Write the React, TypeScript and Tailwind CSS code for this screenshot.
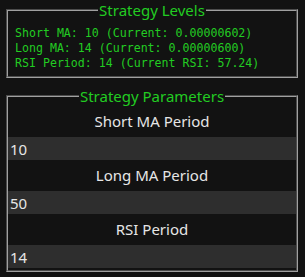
const levels = [
  "Short MA: 10 (Current: 0.00000602)",
  "Long MA: 14 (Current: 0.00000600)",
  "RSI Period: 14 (Current RSI: 57.24)",
];

const params = [
  { label: "Short MA Period", value: "10" },
  { label: "Long MA Period", value: "50" },
  { label: "RSI Period", value: "14" },
];

const App = () => {
  return (
    <div className="w-[305px] h-[277px] bg-[#121212] overflow-hidden font-['Noto_Sans',sans-serif]">
      <fieldset className="ml-[6px] w-[292px] border-2 border-[#a0a0a0] [border-style:groove] px-[7px] pt-[6px] pb-[5px] min-w-0">
        <legend className="mx-auto px-px text-[15px] leading-5 text-[#22cc22]">Strategy Levels</legend>
        <div className="font-['DejaVu_Sans_Mono',monospace] text-[11.6px] leading-[15px] text-[#22cc22]">
          {levels.map((line) => (
            <div key={line} className="whitespace-pre">{line}</div>
          ))}
        </div>
      </fieldset>

      <fieldset className="ml-[6px] mt-[8px] w-[292px] border-2 border-[#a0a0a0] [border-style:groove] px-0 pb-[2px] min-w-0">
        <legend className="mx-auto px-px text-[15px] leading-5 text-[#22cc22]">Strategy Parameters</legend>
        {params.map((p) => (
          <div key={p.label} className="flex flex-col">
            <div className="pt-[4px] pb-[4px] text-center text-[15px] leading-[23px] text-[#e6e6e6]">
              {p.label}
            </div>
            <input
              type="text"
              defaultValue={p.value}
              className="h-[23px] w-full bg-[#2e2e2e] pl-[2px] text-[15px] text-[#e6e6e6] outline-none border-0"
            />
          </div>
        ))}
      </fieldset>
    </div>
  );
};

export default App;
